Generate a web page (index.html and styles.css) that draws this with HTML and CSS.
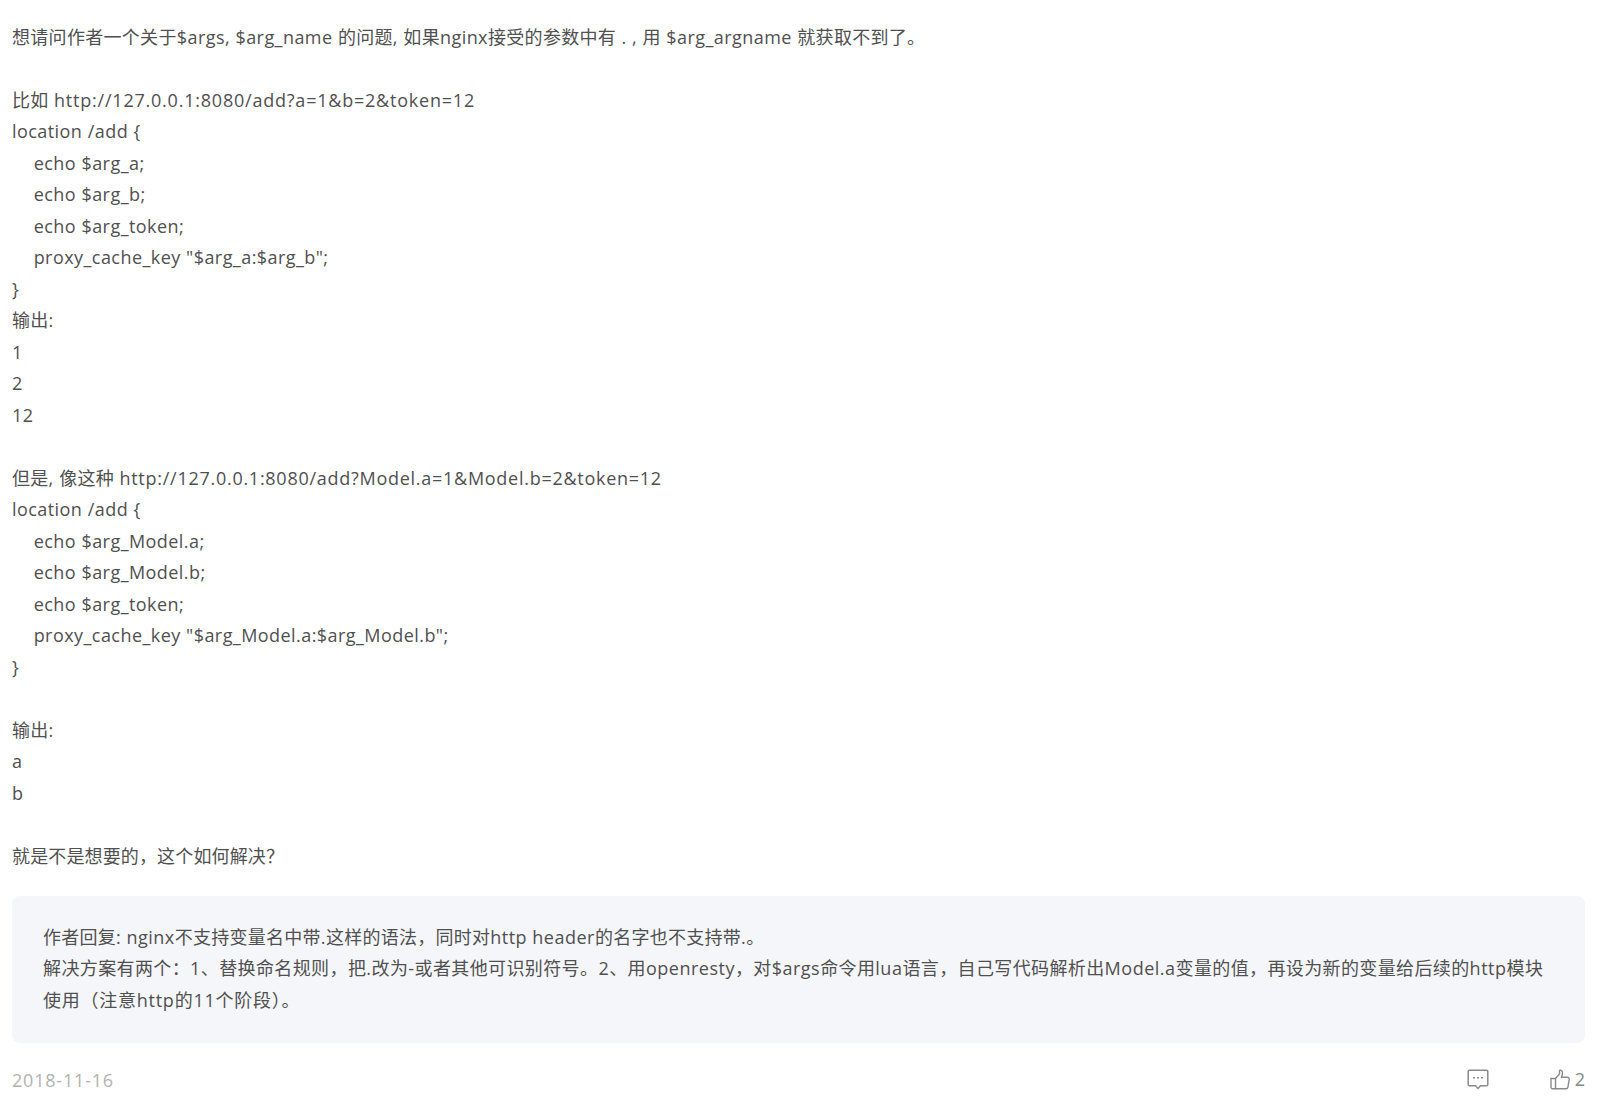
FILE: index.html
```html
<!DOCTYPE html>
<html lang="zh-CN">
<head>
<meta charset="utf-8">
<title>评论</title>
<link rel="stylesheet" href="styles.css">
</head>
<body>
<article class="comment">
<div class="content"><span class="zh">想请问作者一个关于</span>$args, $arg_name <span class="zh">的问题</span>, <span class="zh">如果</span>nginx<span class="zh">接受的参数中有</span> . , <span class="zh">用</span> $arg_argname <span class="zh">就获取不到了。</span>

<span class="zh">比如</span> <span class="url">http://127.0.0.1:8080/add?a=1&amp;b=2&amp;token=12</span>
location /add {
    echo $arg_a;
    echo $arg_b;
    echo $arg_token;
    proxy_cache_key "$arg_a:$arg_b";
}
<span class="zh">输出</span>:
1
2
12

<span class="zh">但是</span>, <span class="zh">像这种</span> <span class="url long">http://127.0.0.1:8080/add?Model.a=1&amp;Model.b=2&amp;token=12</span>
location /add {
    echo $arg_Model.a;
    echo $arg_Model.b;
    echo $arg_token;
    proxy_cache_key "$arg_Model.a:$arg_Model.b";
}

<span class="zh">输出</span>:
a
b

<span class="zh tight">就是不是想要的，这个如何解决？</span></div>
<div class="reply">作者回复<span class="lat">: nginx</span>不支持变量名中带<span class="lat">.</span>这样的语法，同时对<span class="lat">http header</span>的名字也不支持带<span class="lat">.</span>。
<span class="wide">解决方案有两个：<span class="lat">1</span>、替换命名规则，把<span class="lat">.</span>改为<span class="lat">-</span>或者其他可识别符号。<span class="lat">2</span>、用<span class="lat">openresty</span>，对<span class="lat">$args</span>命令用<span class="lat">lua</span>语言，自己写代码解析出<span class="lat">Model.a</span>变量的值，再设为新的变量给后续的<span class="lat">http</span>模块</span><span class="widest">使用（注意http的11个阶段）。</span></div>
<footer class="meta">
<time class="date">2018-11-16</time>
<div class="actions">
<svg class="icon" width="22" height="21" viewBox="0 0 22 21" fill="none" stroke="#8a8a8a" stroke-width="1.5" aria-hidden="true"><path d="M2.5 1.2h17a1.3 1.3 0 0 1 1.3 1.3v13a1.3 1.3 0 0 1-1.3 1.3h-6L11 19.4l-2.5-2.6h-6a1.3 1.3 0 0 1-1.3-1.3v-13a1.3 1.3 0 0 1 1.3-1.3z"/><path d="M6 8.8h2M10 8.8h2M14 8.8h2" stroke-width="1.6"/></svg>
<div class="like">
<svg class="icon" width="20" height="21" viewBox="0 0 20 21" fill="none" stroke="#8a8a8a" stroke-width="1.4" aria-hidden="true"><path d="M1 9.5h4.5v10.300H2.500A1.500 1.500 0 0 1 1 18.300z"/><path d="M5.500 9.500 9.500 5V1.800c0-1 2.900-.8 3 1.700.1 1.700-.5 3.300-1 4.700h5.800c1.400 0 2.100 1.100 1.900 2.300l-1.300 7.600c-.2 1.100-1 1.700-2 1.700H5.500"/></svg>
<span class="count">2</span>
</div>
</div>
</footer>
</article>
</body>
</html>
```
FILE: styles.css
```css
* { box-sizing: border-box; }
html, body { margin: 0; padding: 0; background: #fff; }
body {
  font-family: "Open Sans", "Noto Sans CJK SC", sans-serif;
  color: #505050;
  font-size: 18px;
  line-height: 31.5px;
}
.comment { padding: 21.75px 12px 0; }
.content {
  white-space: pre-wrap;
  word-break: break-word;
  letter-spacing: 0.44px;
  word-spacing: 0.3px;
}
.zh { letter-spacing: 0.3px; word-spacing: 0; }
.zh.tight { letter-spacing: 0.14px; }
.url { letter-spacing: 0.78px; word-spacing: 0; }
.url.long { letter-spacing: 0.73px; }
.lat { letter-spacing: 0.5px; }
.wide { letter-spacing: 0.38px; }
.widest { letter-spacing: 0.75px; }
.reply {
  margin-top: 24px;
  padding: 25.65px 31px 26.35px;
  background: #f5f6fa;
  border-radius: 8px;
  white-space: pre-wrap;
  letter-spacing: 0.25px;
}
.meta {
  display: flex;
  justify-content: space-between;
  align-items: center;
  margin-top: 20px;
}
.date { color: #b2b2b2; letter-spacing: 0.8px; padding-top: 2px; }
.actions { display: flex; align-items: center; gap: 61px; }
.like { display: flex; align-items: center; gap: 5px; }
.count { color: #888; }
.icon { display: block; }
```
